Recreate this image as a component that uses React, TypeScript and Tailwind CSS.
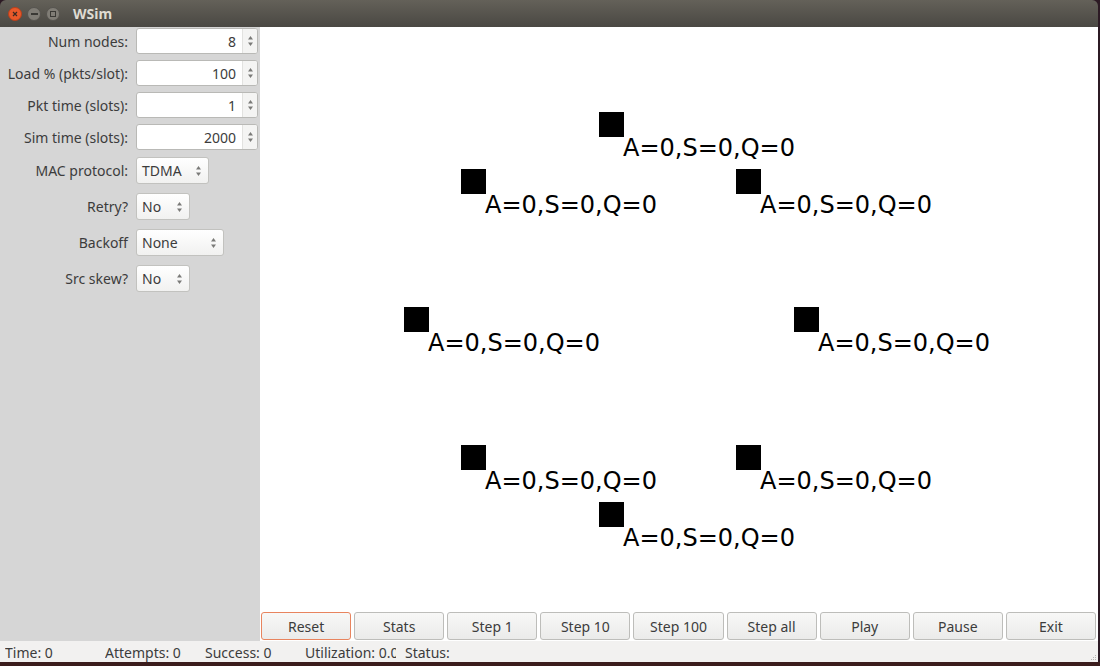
import React from "react"

const ui = { fontFamily: '"Noto Sans", "Open Sans", sans-serif' }

const spins = [
  { label: "Num nodes:", value: "8" },
  { label: "Load % (pkts/slot):", value: "100" },
  { label: "Pkt time (slots):", value: "1" },
  { label: "Sim time (slots):", value: "2000" },
]

const combos = [
  { label: "MAC protocol:", value: "TDMA", w: "w-[73px]" },
  { label: "Retry?", value: "No", w: "w-[54px]" },
  { label: "Backoff", value: "None", w: "w-[88px]" },
  { label: "Src skew?", value: "No", w: "w-[54px]" },
]

const nodes = [
  [339, 85],
  [201, 142],
  [476, 142],
  [144, 280],
  [534, 280],
  [201, 418],
  [476, 418],
  [339, 475],
]

const buttons = ["Reset", "Stats", "Step 1", "Step 10", "Step 100", "Step all", "Play", "Pause", "Exit"]

const status = [
  { text: "Time: 0", w: "w-[100px]" },
  { text: "Attempts: 0", w: "w-[100px]" },
  { text: "Success: 0", w: "w-[100px]" },
  { text: "Utilization: 0.0", w: "w-[91px] mr-[9px]" },
  { text: "Status:", w: "w-[100px]" },
]

function UpDown() {
  return (
    <svg width="7" height="12" viewBox="0 0 7 12">
      <path d="M3.5 1 L6 4.5 L1 4.5 Z" fill="#7a7a78" />
      <path d="M3.5 11 L6 7.5 L1 7.5 Z" fill="#7a7a78" />
    </svg>
  )
}

function TitleButton({ kind }: { kind: "close" | "min" | "max" }) {
  if (kind === "close") {
    return (
      <div className="w-[14px] h-[14px] rounded-full bg-[#e9592a] border border-[#b8401c] flex items-center justify-center">
        <svg width="6" height="6" viewBox="0 0 6 6">
          <path d="M1 1 L5 5 M5 1 L1 5" stroke="#3b2a22" strokeWidth="1.2" />
        </svg>
      </div>
    )
  }
  return (
    <div className="w-[14px] h-[14px] rounded-full bg-[#807d76] border border-[#56544f] flex items-center justify-center">
      {kind === "min" ? (
        <div className="w-[7px] h-[2px] bg-[#3a3935]" />
      ) : (
        <div className="w-[6px] h-[6px] border border-[#3a3935]" />
      )}
    </div>
  )
}

export default function App() {
  return (
    <div className="w-[1100px] h-[666px] bg-[#2c1a24] flex flex-col overflow-hidden" style={ui}>
      {/* title bar */}
      <div className="w-[1098px] h-[27px] rounded-t-[6px] bg-gradient-to-b from-[#646159] to-[#4a4843] flex items-center pl-[8px]">
        <div className="flex gap-[5px]">
          <TitleButton kind="close" />
          <TitleButton kind="min" />
          <TitleButton kind="max" />
        </div>
        <span className="ml-[13px] text-[14px] font-bold text-[#dfdbd2]">WSim</span>
      </div>

      {/* body */}
      <div className="w-[1098px] h-[614px] flex">
        {/* left panel */}
        <div className="w-[260px] bg-[#d6d6d6] pt-[1px] flex flex-col text-[14px] text-[#3c3c3c]">
          <div className="flex flex-col gap-[6px]">
            {spins.map((s) => (
              <div key={s.label} className="flex items-center h-[26px]">
                <span className="w-[129px] text-right pr-[1px]">{s.label}</span>
                <div className="ml-[7px] w-[122px] h-[26px] flex rounded-[3px] border border-[#b9b9b6] bg-white overflow-hidden">
                  <div className="flex-1 flex items-center justify-end pr-[6px]">{s.value}</div>
                  <div className="w-[15px] flex items-center justify-center bg-[#f4f4f3] border-l border-[#e2e2e0]">
                    <UpDown />
                  </div>
                </div>
              </div>
            ))}
          </div>
          <div className="flex flex-col gap-[9px] mt-[7px]">
            {combos.map((c) => (
              <div key={c.label} className="flex items-center h-[27px]">
                <span className="w-[129px] text-right pr-[1px]">{c.label}</span>
                <div
                  className={`ml-[7px] ${c.w} h-[27px] flex items-center justify-between pl-[5px] pr-[6px] rounded-[3px] border border-[#c2c2bf] bg-gradient-to-b from-[#ffffff] to-[#f1f1f0]`}
                >
                  <span>{c.value}</span>
                  <UpDown />
                </div>
              </div>
            ))}
          </div>
        </div>

        {/* right side */}
        <div className="flex-1 flex flex-col bg-white">
          <div className="relative flex-1">
            {nodes.map(([x, y], i) => (
              <div key={i} className="absolute" style={{ left: x, top: y }}>
                <div className="w-[25px] h-[25px] bg-black" />
                <span
                  className="absolute left-[24px] top-[19px] whitespace-nowrap text-[24px] leading-[34px] text-black"
                  style={{ fontFamily: '"DejaVu Sans", sans-serif' }}
                >
                  A=0,S=0,Q=0
                </span>
              </div>
            ))}
          </div>
          <div className="h-[30px] pl-[1px] pr-[2px] py-[1px] grid grid-cols-9 gap-[3px] text-[14px] text-[#3c3c3c]">
            {buttons.map((b, i) => (
              <div
                key={b}
                className={`flex items-center justify-center rounded-[3px] border bg-gradient-to-b from-[#f8f8f7] to-[#ebebea] ${
                  i === 0 ? "border-[#e8845e]" : "border-[#bdbdba]"
                }`}
              >
                {b}
              </div>
            ))}
          </div>
        </div>
      </div>

      {/* status bar */}
      <div className="relative w-[1098px] h-[21px] bg-[#f2f1f0] flex items-center pl-[5px] pt-[1px] text-[14px] text-[#3c3c3c]">
        {status.map((s) => (
          <div key={s.text} className={`${s.w} overflow-hidden whitespace-nowrap`}>
            {s.text}
          </div>
        ))}
        <div className="absolute right-[2px] bottom-[2px] grid grid-cols-3 gap-[1px]">
          {Array.from({ length: 9 }).map((_, i) => (
            <div key={i} className={`w-[1px] h-[1px] ${(i % 3) + Math.floor(i / 3) >= 2 ? "bg-[#b5b5b2]" : ""}`} />
          ))}
        </div>
      </div>
      <div className="h-[4px] bg-[#3b1d1d]" />
    </div>
  )
}
